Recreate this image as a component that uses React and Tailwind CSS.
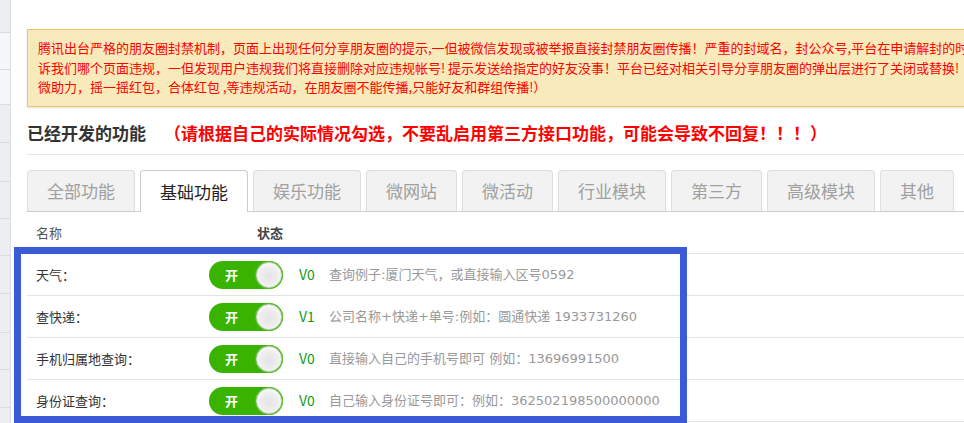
import React from "react";

const sideRows = [
  "h-[33px] bg-[#eceef1]",
  "h-[37px] bg-[#f6f7f9]",
  "h-[35px] bg-[#f6f7f9]",
  "h-[38px] bg-[#eceef1]",
  "h-[39px] bg-[#eceef1]",
  "h-[37px] bg-[#eceef1]",
  "h-[37px] bg-[#eceef1]",
  "h-[38px] bg-[#eceef1]",
  "h-[39px] bg-[#eceef1]",
  "h-[37px] bg-[#eceef1]",
  "h-[38px] bg-[#eceef1]",
  "h-[20px] bg-[#eceef1]",
];

const tabs = [
  "全部功能",
  "基础功能",
  "娱乐功能",
  "微网站",
  "微活动",
  "行业模块",
  "第三方",
  "高级模块",
  "其他",
];

const rows = [
  { name: "天气：", v: "V0", desc: "查询例子:厦门天气，或直接输入区号0592" },
  { name: "查快递：", v: "V1", desc: "公司名称+快递+单号:例如：圆通快递 1933731260" },
  { name: "手机归属地查询：", v: "V0", desc: "直接输入自己的手机号即可 例如：13696991500" },
  { name: "身份证查询：", v: "V0", desc: "自己输入身份证号即可：例如：362502198500000000" },
];

function Toggle() {
  return (
    <div className="flex h-[28px] w-[74px] shrink-0 items-center justify-between rounded-full bg-[#39b300] pl-[16px] pr-[1px]">
      <span className="text-[13px] font-bold leading-none text-white">开</span>
      <span className="h-[26px] w-[26px] rounded-full border border-[#d4d4d4] bg-[radial-gradient(circle_at_50%_55%,#e4e4e4_0%,#eeeeee_50%,#ffffff_85%)] shadow-[0_0_0_1px_#5cc02a]" />
    </div>
  );
}

export default function App() {
  return (
    <div
      className="relative flex h-[423px] w-[964px] overflow-hidden bg-white"
      style={{ fontFamily: '"Noto Sans CJK SC", "Liberation Sans", sans-serif' }}
    >
      {/* clipped sidebar */}
      <div className="flex w-[11px] shrink-0 flex-col border-r border-[#dde0e4]">
        {sideRows.map((c, i) => (
          <div key={i} className={`${c} shrink-0 border-b border-[#d8dbe0]`} />
        ))}
      </div>

      {/* main */}
      <div className="w-[1010px] shrink-0 pl-[16px]">
        {/* alert */}
        <div className="mt-[29px] h-[78px] overflow-hidden whitespace-nowrap border border-[#efc469] bg-[#f9eabb] px-[10px] pt-[8px] text-[13px] leading-[19.5px] text-[#ff0000] shadow-[0_1px_2px_rgba(0,0,0,0.12)]">
          <div>腾讯出台严格的朋友圈封禁机制，页面上出现任何分享朋友圈的提示,一但被微信发现或被举报直接封禁朋友圈传播！严重的封域名，封公众号,平台在申请解封的时候，腾讯不会告</div>
          <div>诉我们哪个页面违规，一但发现用户违规我们将直接删除对应违规帐号! 提示发送给指定的好友没事！平台已经对相关引导分享朋友圈的弹出层进行了关闭或替换!</div>
          <div>微助力，摇一摇红包，合体红包 ,等违规活动，在朋友圈不能传播,只能好友和群组传播!）</div>
        </div>

        {/* title */}
        <div className="flex items-center border-b border-[#e6e6e6] pb-[9px] pt-[14px] text-[17px] font-bold leading-[24px]">
          <span className="text-[#333]">已经开发的功能</span>
          <span className="ml-[18px] text-[#ff0000]">（请根据自己的实际情况勾选，不要乱启用第三方接口功能，可能会导致不回复！！！）</span>
        </div>

        {/* tabs */}
        <div className="mt-[15px] flex gap-[5px] border-b border-[#cccccc]">
          {tabs.map((t, i) =>
            i === 1 ? (
              <div
                key={t}
                className="-mb-px flex h-[42px] items-center rounded-t-[4px] border border-b-0 border-[#cccccc] bg-white px-[19px] text-[17px] text-[#222]"
              >
                {t}
              </div>
            ) : (
              <div
                key={t}
                className="flex h-[41px] items-center rounded-t-[4px] border border-b-0 border-[#dedede] bg-[#f2f2f2] px-[19px] text-[17px] text-[#a0a0a0]"
              >
                {t}
              </div>
            )
          )}
        </div>

        {/* header row */}
        <div className="flex h-[42px] items-center border-b border-[#e3e3e3] text-[13px]">
          <div className="w-[230px] pl-[9px] text-[#555]">名称</div>
          <div className="font-bold text-[#444]">状态</div>
        </div>

        {rows.map((r) => (
          <div key={r.name} className="flex h-[42px] items-center border-b border-[#e3e3e3] text-[13px]">
            <div className="w-[182px] shrink-0 pl-[9px] text-[#333]">{r.name}</div>
            <Toggle />
            <div className="ml-[16px] w-[30px] shrink-0 text-[14px] text-[#139b13]">{r.v}</div>
            <div
              className="text-[#999]"
              style={{ fontFamily: '"DejaVu Sans", "Noto Sans CJK SC", sans-serif' }}
            >
              {r.desc}
            </div>
          </div>
        ))}
      </div>

      {/* annotation box */}
      <div className="pointer-events-none absolute left-[14px] top-[247px] h-[176px] w-[673px] border-[7px] border-[#3b5bd6]" />
    </div>
  );
}
